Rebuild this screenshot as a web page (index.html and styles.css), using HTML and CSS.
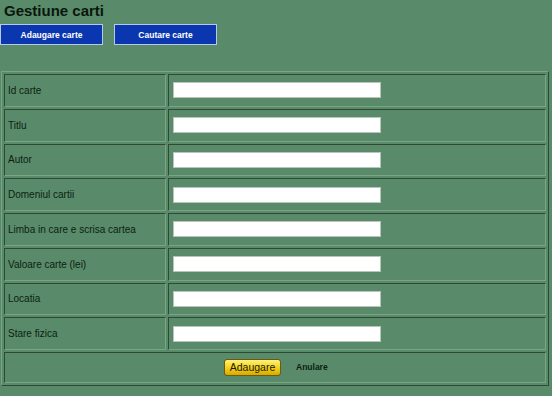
FILE: index.html
```html
<!DOCTYPE html>
<html lang="ro">
<head>
    <meta charset="UTF-8">
    <title>Gestiune carti</title>
    <link rel="stylesheet" href="styles.css">
</head>
<body>
    <h1 class="title">Gestiune carti</h1>
    <div class="tabs">
        <a class="tab-btn" href="#">Adaugare carte</a>
        <a class="tab-btn" href="#">Cautare carte</a>
    </div>

    <form>
        <table class="book-form">
            <tr><td class="label">Id carte</td><td class="field"><input type="text"></td></tr>
            <tr><td class="label">Titlu</td><td class="field"><input type="text"></td></tr>
            <tr><td class="label">Autor</td><td class="field"><input type="text"></td></tr>
            <tr><td class="label">Domeniul cartii</td><td class="field"><input type="text"></td></tr>
            <tr><td class="label">Limba in care e scrisa cartea</td><td class="field"><input type="text"></td></tr>
            <tr><td class="label">Valoare carte (lei)</td><td class="field"><input type="text"></td></tr>
            <tr><td class="label">Locatia</td><td class="field"><input type="text"></td></tr>
            <tr><td class="label">Stare fizica</td><td class="field"><input type="text"></td></tr>
            <tr>
                <td class="actions" colspan="2">
                    <div class="actions-inner">
                        <button type="button" class="btn-add">Adaugare</button>
                        <a class="cancel" href="#">Anulare</a>
                    </div>
                </td>
            </tr>
        </table>
    </form>
</body>
</html>
```

FILE: styles.css
```css
body {
    margin: 0;
    background: #598a6a;
    color: #0c1f10;
    font-family: 'Liberation Sans', Arial, sans-serif;
}

.title {
    margin: 2px 0 0 4px;
    font-size: 15px;
    line-height: 18px;
    font-weight: bold;
    color: #0a170c;
}

.tabs {
    display: flex;
    gap: 11px;
    margin-top: 4px;
}

.tab-btn {
    display: flex;
    align-items: center;
    justify-content: center;
    box-sizing: border-box;
    width: 103px;
    height: 21px;
    background: #0a36b0;
    border: 1px solid #b8c8e8;
    color: #fff;
    font-size: 8.5px;
    font-weight: bold;
    text-decoration: none;
}

.book-form {
    margin: 26px 0 0 1px;
    width: 548px;
    border-collapse: separate;
    border-spacing: 2px;
    border: 1px solid;
    border-color: #7aa585 #2c4a34 #2c4a34 #7aa585;
}

.book-form td {
    box-sizing: border-box;
    height: 32.75px;
    border: 1px solid;
    border-color: #2c4a34 #7aa585 #7aa585 #2c4a34;
    font-size: 10px;
    padding: 0;
}

.label {
    width: 162px;
    padding-left: 3px !important;
}

.field {
    padding-left: 4px !important;
}

.field input {
    display: block;
    box-sizing: border-box;
    width: 208px;
    height: 16px;
    margin: 0;
    border: 1px solid #b9c4bb;
    background: #fff;
}

.book-form td.actions {
    height: 30.5px;
}

.actions-inner {
    display: flex;
    justify-content: center;
    align-items: center;
    gap: 15px;
}

.btn-add {
    box-sizing: border-box;
    width: 57px;
    height: 17px;
    padding: 0;
    border: 1px solid #6b5a10;
    border-radius: 3px;
    background: linear-gradient(#fff27a, #f2cf1a 55%, #d9a800);
    font-family: 'Liberation Sans', Arial, sans-serif;
    font-size: 10.5px;
    color: #1a1a00;
}

.cancel {
    width: 30px;
    font-size: 8.5px;
    font-weight: bold;
    color: #0c1f10;
    text-decoration: none;
}
```
